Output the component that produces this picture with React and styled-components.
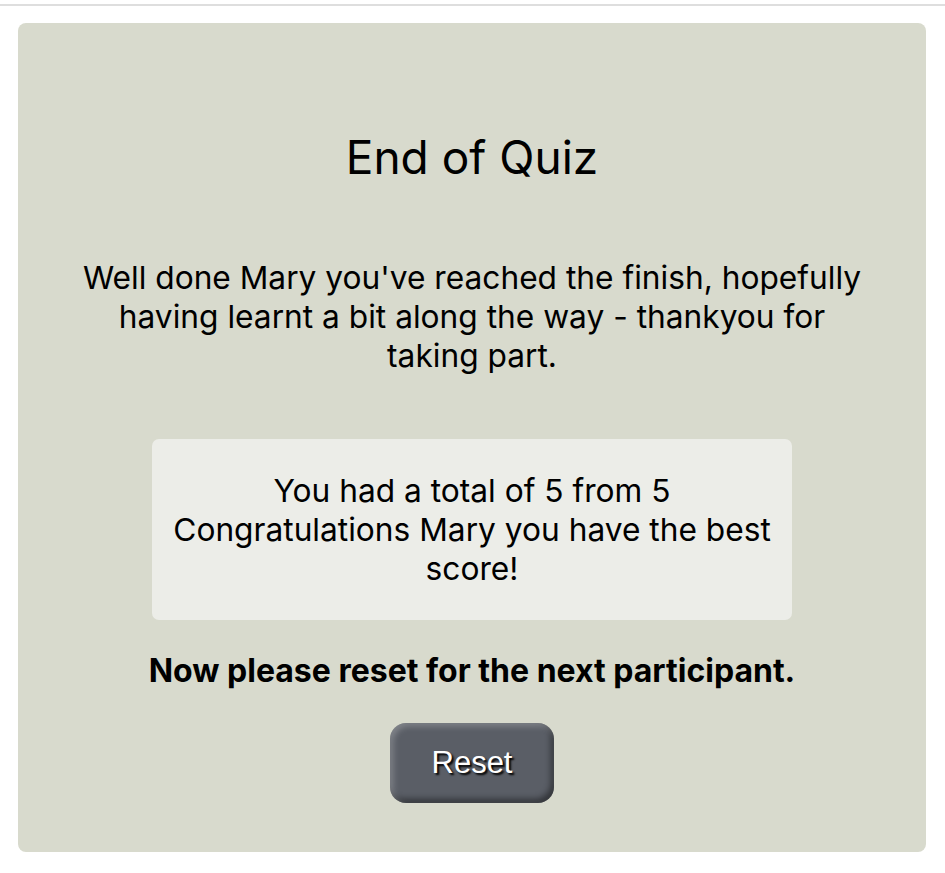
import React from 'react';
import styled, { createGlobalStyle } from 'styled-components';

const GlobalStyle = createGlobalStyle`
	html, body {
		margin: 0;
		padding: 0;
		background: #ffffff;
	}

	body {
		font-family: Inter, "Noto Sans", "Liberation Sans", sans-serif;
		color: #000;
	}
`;

const result = {
	name: 'Mary',
	score: 5,
	total: 5,
};

export default function App() {
	return (
		<>
			<GlobalStyle />
			<Page>
				<TopRule />

				<Card>
					<Title>End of Quiz</Title>

					<Message>
						Well done { result.name } you've reached the finish, hopefully having learnt a bit along the way - thankyou for taking part.
					</Message>

					<ScoreBox>
						<ScoreLine>You had a total of { result.score } from { result.total }</ScoreLine>
						<ScoreLine>Congratulations { result.name } you have the best score!</ScoreLine>
					</ScoreBox>

					<Notice>Now please reset for the next participant.</Notice>

					<ResetButton type="button">Reset</ResetButton>
				</Card>
			</Page>
		</>
	);
}

const Page = styled.div`
	display: flex;
	flex-direction: column;
	padding-top: 4px;
`;

const TopRule = styled.div`
	height: 2px;
	background: #dedede;
`;

const Card = styled.main`
	display: flex;
	flex-direction: column;
	align-items: center;
	margin: 17px 19px 0 18px;
	padding: 107px 56px 49px;
	background: #d8dacd;
	border-radius: 8px;
`;

const Title = styled.h1`
	margin: 0;
	font-size: 46px;
	font-weight: 400;
	line-height: 54px;
`;

const Message = styled.p`
	margin: 74px 0 0;
	font-size: 31.7px;
	line-height: 39px;
	text-align: center;
`;

const ScoreBox = styled.section`
	display: flex;
	flex-direction: column;
	align-items: center;
	box-sizing: border-box;
	width: 640px;
	margin-top: 64px;
	padding: 32px 16px;
	background: #ecede8;
	border-radius: 7px;
	font-size: 31.7px;
	line-height: 39px;
	text-align: center;
`;

const ScoreLine = styled.div``;

const Notice = styled.p`
	margin: 31px 0 0;
	font-size: 32px;
	font-weight: 700;
	line-height: 39px;
	text-align: center;
`;

const ResetButton = styled.button`
	width: 164px;
	height: 80px;
	margin-top: 33px;
	border: none;
	border-radius: 16px;
	background: #5a5e66;
	box-shadow:
		inset 3px 3px 6px rgba(255, 255, 255, 0.25),
		inset -3px -4px 6px rgba(0, 0, 0, 0.45);
	color: #fff;
	font-family: "Liberation Sans", Arial, sans-serif;
	font-size: 31px;
	text-shadow: 2px 2px 2px #000;
	cursor: pointer;
`;
